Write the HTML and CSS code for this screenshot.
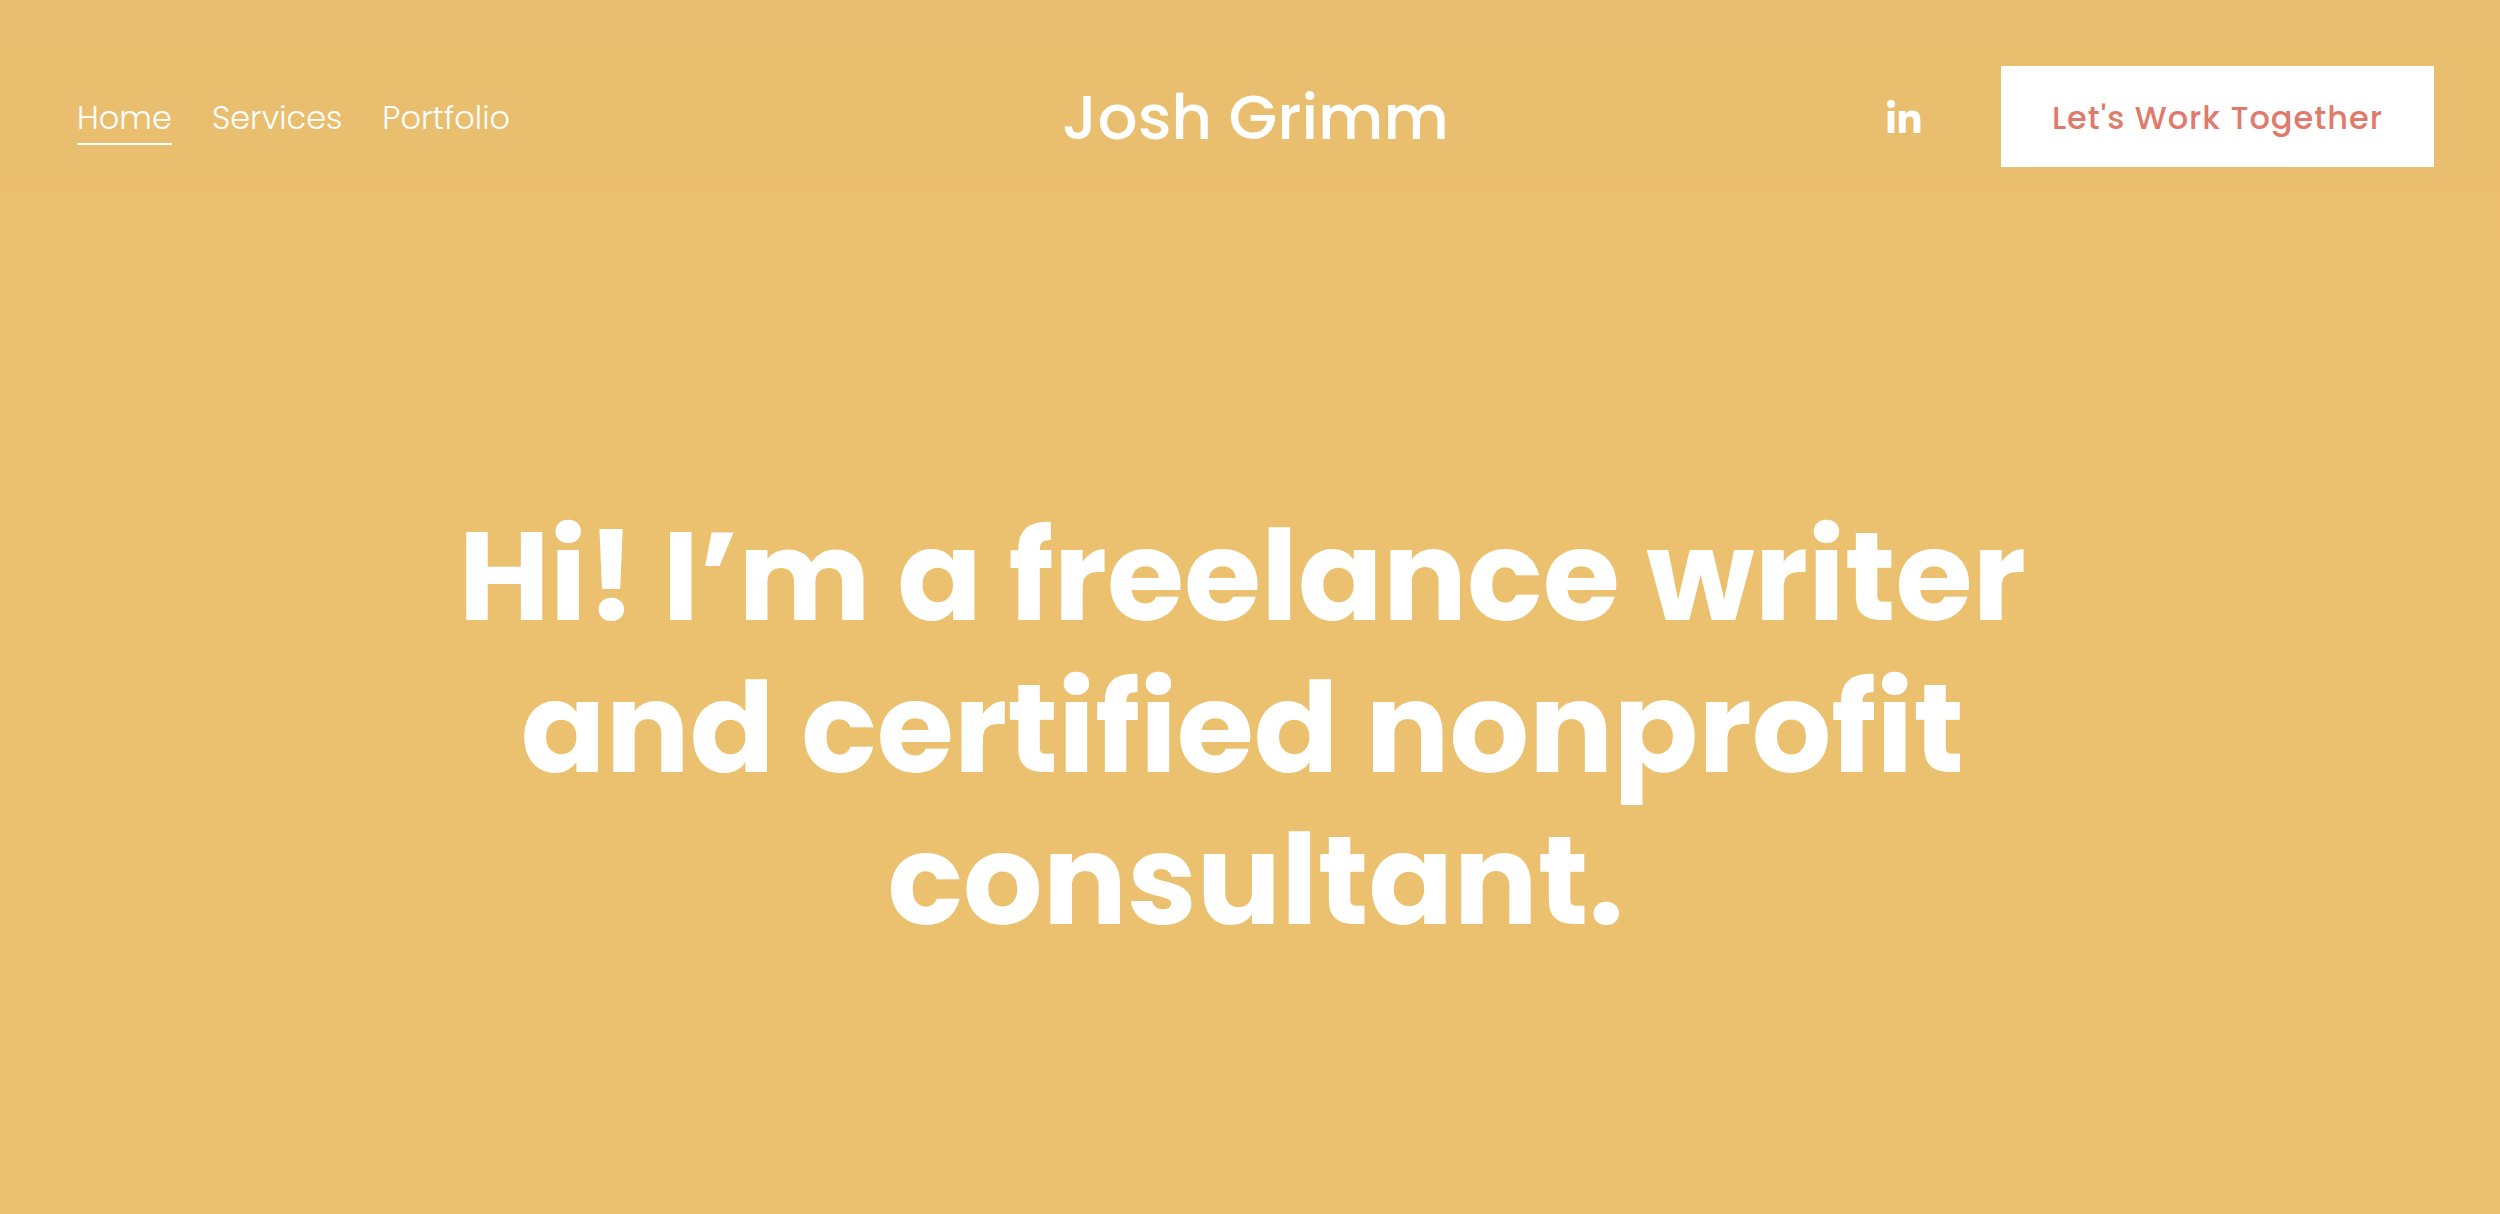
FILE: index.html
```html
<!DOCTYPE html>
<html lang="en">
<head>
<meta charset="utf-8">
<meta name="viewport" content="width=device-width, initial-scale=1">
<title>Josh Grimm</title>
<link rel="stylesheet" href="styles.css">
</head>
<body>
<header class="header">
  <nav class="nav" aria-label="Main">
    <a class="nav-link active" href="#home">Home</a>
    <a class="nav-link" href="#services">Services</a>
    <a class="nav-link" href="#portfolio">Portfolio</a>
  </nav>
  <a class="brand" href="#home">Josh Grimm</a>
  <div class="actions">
    <a class="social" href="#linkedin" aria-label="LinkedIn">
      <svg class="social-icon" viewBox="0 0 34 34" aria-hidden="true"><circle cx="4" cy="4" r="4"/><path d="M0.6 11H7.4V33H0.6ZM11.8 11H18.4V14C19.6 11.9 22 10.4 25 10.4C32 10.4 33.4 15 33.4 21V33H26.5V22.3C26.5 19.7 26.4 16.5 22.9 16.5C19.3 16.5 18.7 19.2 18.7 22.1V33H11.8Z"/></svg>
    </a>
    <a class="cta" href="#contact">Let's Work Together</a>
  </div>
</header>
<main class="hero" id="home">
  <h1 class="hero-title">Hi! I’m a freelance writer&nbsp;<br>and certified nonprofit&nbsp;<br>consultant.</h1>
</main>
</body>
</html>
```
FILE: styles.css
```css
* { box-sizing: border-box; }
body {
  margin: 0;
  min-height: 100vh;
  background: linear-gradient(#e9bd6f, #ebc06e 30%, #ebc06e);
  color: #fff;
  font-family: Poppins, Lato, sans-serif;
}
a { color: inherit; text-decoration: none; }
.header {
  display: grid;
  grid-template-columns: 1fr auto 1fr;
  align-items: center;
  padding: 66px 66px 0 77px;
}
.nav { display: flex; gap: 40px; }
.nav-link {
  padding: 5px 0 1px;
  border-bottom: 2px solid transparent;
  font-size: 32px;
  font-weight: 300;
  line-height: 48px;
}
.active { border-color: currentColor; }
.brand { font-size: 63px; font-weight: 500; line-height: 80px; }
.actions { display: flex; align-items: center; justify-content: flex-end; gap: 80px; }
.social { display: flex; }
.social-icon { width: 34px; height: 34px; fill: currentColor; }
.cta {
  padding: 27px 51px 25px;
  background: #fff;
  color: #e07a6b;
  font-size: 32px;
  font-weight: 500;
  line-height: 49px;
  letter-spacing: 1px;
}
.hero { padding: 334px 66px 240px 77px; text-align: center; }
.hero-title { margin: 0; font-size: 125px; font-weight: 700; line-height: 152px; }
```
